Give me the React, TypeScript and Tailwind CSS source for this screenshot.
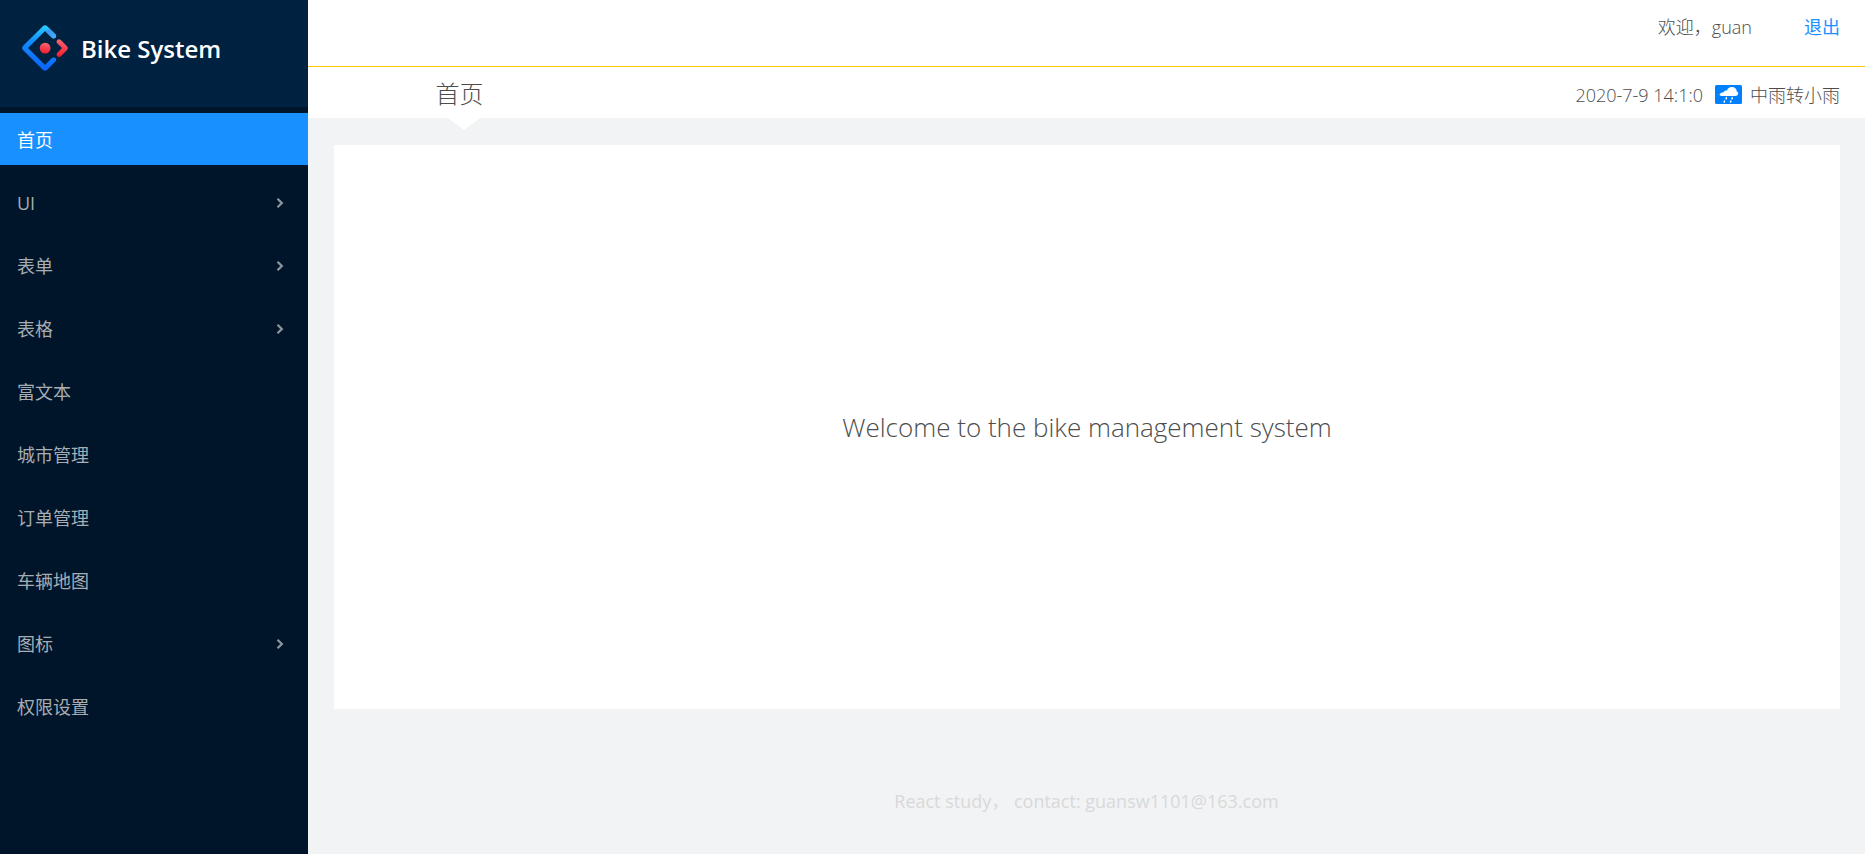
import { useState } from 'react';

type MenuEntry = { title: string; expandable?: boolean };

const menu: MenuEntry[] = [
  { title: '首页' },
  { title: 'UI', expandable: true },
  { title: '表单', expandable: true },
  { title: '表格', expandable: true },
  { title: '富文本' },
  { title: '城市管理' },
  { title: '订单管理' },
  { title: '车辆地图' },
  { title: '图标', expandable: true },
  { title: '权限设置' },
];

function Logo() {
  return (
    <svg viewBox="0 0 200 200" className="size-[46px] shrink-0" aria-hidden="true">
      <defs>
        <linearGradient id="ring" x1="62%" y1="0%" x2="50%" y2="100%">
          <stop offset="0%" stopColor="#29cdff" />
          <stop offset="38%" stopColor="#148eff" />
          <stop offset="100%" stopColor="#0a60ff" />
        </linearGradient>
        <linearGradient id="tip" x1="0%" y1="0%" x2="100%" y2="100%">
          <stop offset="0%" stopColor="#3b8dee" />
          <stop offset="100%" stopColor="#3fb4ff" />
        </linearGradient>
        <linearGradient id="red" x1="69%" y1="-13%" x2="50%" y2="105%">
          <stop offset="0%" stopColor="#fa816e" />
          <stop offset="41%" stopColor="#f74a5c" />
          <stop offset="100%" stopColor="#f51d2c" />
        </linearGradient>
      </defs>
      <path
        fill="url(#ring)"
        d="M91.59 4.18 4.18 91.51C-.52 96.21-.52 103.79 4.18 108.49L91.59 195.82C96.29 200.52 103.88 200.52 108.58 195.82L145.23 159.2C149.43 155 149.43 148.18 145.23 143.98 141.02 139.77 134.19 139.77 129.99 143.98L102.2 171.74C101.03 172.91 99.26 172.91 98.09 171.74L28.29 101.99C27.12 100.82 27.12 99.05 28.29 97.88L98.09 28.14C99.26 26.97 101.03 26.97 102.2 28.14L129.99 55.9C134.19 60.1 141.02 60.1 145.23 55.9 149.43 51.69 149.43 44.88 145.23 40.67L108.58 4.06C103.86-.54 96.27-.5 91.59 4.18Z"
      />
      <path
        fill="url(#tip)"
        d="M102.2 28.14 129.99 55.9C134.19 60.1 141.02 60.1 145.23 55.9 149.43 51.69 149.43 44.88 145.23 40.67L126 21.5C117 20 108 22 102.2 28.14Z"
      />
      <path
        fill="url(#red)"
        d="M153.69 135.85C157.89 140.06 164.72 140.06 168.93 135.85L195.96 108.84C200.66 104.15 200.66 96.56 195.96 91.87L168.69 64.72C164.47 60.52 157.65 60.52 153.44 64.73 149.23 68.94 149.23 75.75 153.44 79.96L171.85 98.36C173.02 99.53 173.02 101.3 171.85 102.47L153.69 120.63C149.48 124.83 149.48 131.65 153.69 135.85Z"
      />
      <circle cx="100.5" cy="100.4" r="23.6" fill="url(#red)" />
    </svg>
  );
}

function RainIcon() {
  return (
    <svg viewBox="0 0 27 19" className="h-[19px] w-[27px] shrink-0" role="img" aria-label="雨">
      <rect width="27" height="19" rx="1.5" fill="#0080ff" />
      <path
        fill="#fff"
        d="M8.2 11C6 11 4.600 10.500 4.600 9.500 4.600 8.500 6.200 7.500 8.500 7.200 9.200 5.900 10.500 5.300 12 5.600 12.600 3.300 14.300 2 16.800 2 19.800 2 21.600 3.800 21.700 6.200 22.700 6.700 23.200 7.500 23.200 8.600 23.200 10.200 22 11 20.200 11Z"
      />
      <g fill="#fff">
        <path d="M11.800 11.600 12.100 13.500A.9.900 0 1 1 10.400 13.100Z" />
        <path d="M17.600 11.600 17.900 13.500A.9.900 0 1 1 16.200 13.100Z" />
        <path d="M9.900 14.800 10.200 16.800A.9.900 0 1 1 8.500 16.400Z" />
        <path d="M16.200 14.800 16.500 16.800A.9.900 0 1 1 14.800 16.400Z" />
      </g>
    </svg>
  );
}

function Chevron() {
  return (
    <svg
      viewBox="0 0 8 12"
      className="h-3 w-2 text-[#8c959e]"
      fill="none"
      stroke="currentColor"
      strokeWidth="2.300"
      aria-hidden="true"
    >
      <path d="M1.500 1.800 5.800 6 1.500 10.200" />
    </svg>
  );
}

function Sidebar() {
  const [active, setActive] = useState('首页');
  return (
    <aside className="w-[308px] shrink-0 bg-[#001529]">
      <div className="flex h-[107px] items-start gap-[13px] bg-[#002140] pt-[25px] pl-[22px]">
        <Logo />
        <h1 className="text-2xl leading-12 font-semibold text-white">Bike System</h1>
      </div>
      <nav className="mt-1.5 flex flex-col gap-[11px]">
        {menu.map(({ title, expandable }) => (
          <button
            key={title}
            type="button"
            onClick={() => setActive(title)}
            className={`flex h-[52px] items-center justify-between pt-px pr-6 pl-[17px] text-left text-lg ${
              title === active ? 'bg-[#1890ff] text-white' : 'text-[#a6adb4]'
            }`}
          >
            <span>{title}</span>
            {expandable && <Chevron />}
          </button>
        ))}
      </nav>
    </aside>
  );
}

function Header() {
  return (
    <header className="bg-white text-lg font-light text-[#4d4d4d]">
      <div className="flex h-[67px] items-start justify-end gap-[52px] border-b border-[#f9c700] pt-[13px] pr-[25px]">
        <span>欢迎，guan</span>
        <a href="#logout" className="font-normal text-[#1890ff]">
          退出
        </a>
      </div>
      <div className="flex h-[51px] items-center justify-between pr-[25px] pl-[26px]">
        <h2 className="relative flex h-full w-1/6 items-center justify-center pt-0.5 text-2xl">
          首页
          <svg viewBox="0 0 32 12" className="absolute top-full left-1/2 -ml-3 h-3 w-8" aria-hidden="true">
            <path d="M0 0H32L16 12Z" fill="#fff" />
          </svg>
        </h2>
        <div className="flex items-center pt-1">
          <time className="mr-3">2020-7-9 14:1:0</time>
          <RainIcon />
          <span className="ml-2">中雨转小雨</span>
        </div>
      </div>
    </header>
  );
}

export default function App() {
  return (
    <div className="flex min-h-screen bg-[#f1f3f5] font-['Open_Sans','Noto_Sans_CJK_SC',sans-serif]">
      <Sidebar />
      <div className="flex min-w-0 grow flex-col">
        <Header />
        <main className="mt-[27px] mr-[25px] ml-[26px] flex h-[66vh] items-center justify-center bg-white pt-0.5">
          <p className="text-[26px] font-light text-[#4d4d4d]">Welcome to the bike management system</p>
        </main>
        <footer className="flex grow items-center justify-center pt-10 text-lg text-[#d9d9d9]">
          <p>React study，&nbsp;contact: guansw1101@163.com</p>
        </footer>
      </div>
    </div>
  );
}
